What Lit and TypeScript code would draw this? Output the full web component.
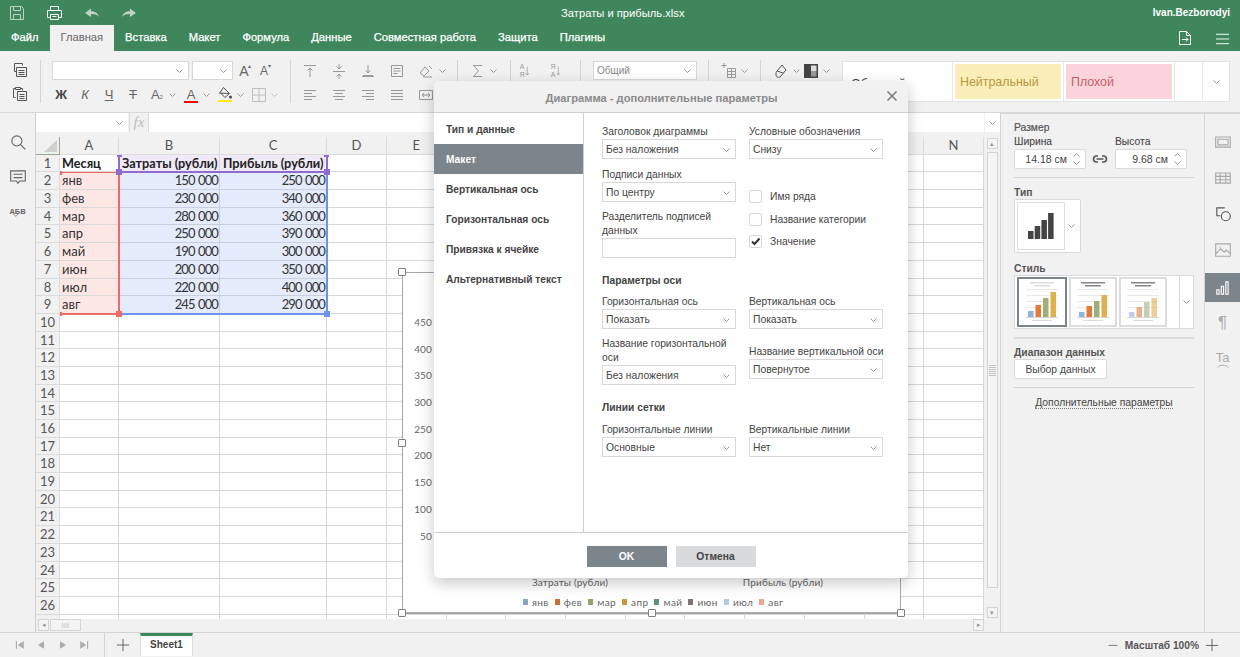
import { LitElement, css, html, svg } from "lit";
import { customElement } from "lit/decorators.js";

// small stroked icon from a single path
const ic = (d: string, size = 16, cls = "") =>
  html`<svg class="ic ${cls}" width=${size} height=${size} viewBox="0 0 16 16"><path d=${d}></path></svg>`;
// filled variant
const fi = (d: string, size = 16, cls = "") =>
  html`<svg class="fi ${cls}" width=${size} height=${size} viewBox="0 0 16 16"><path d=${d}></path></svg>`;

const chev = html`<svg class="chev" width="7" height="4" viewBox="0 0 7 4"><path d="M.5.5l3 3 3-3"></path></svg>`;

const P = {
  save: "M1.5 1.5h11l2 2v11h-13z M4.5 1.5v4h7v-4 M4.5 14.5v-5h7v5",
  print: "M4.5 5.5v-4h8v4 M4.5 12.5h-3v-7h14v7h-3 M4.5 9.5h8v5h-8z M6.5 11.5h4",
  undo: "M1 8l6-4.500v2.800c4 0 6.800 1.700 8 5.700-1.800-2.400-4.200-3-8-3V12z",
  redo: "M15 8L9 3.500v2.800c-4 0-6.800 1.700-8 5.700 1.800-2.400 4.200-3 8-3V12z",
  move: "M2.5 1.5h7l4 4v9h-11z M9.5 1.5v4h4 M5 9.5h6 M9 7.5l2 2-2 2",
  menu: "M1 3.5h14 M1 8.5h14 M1 13.5h14",
  copy: "M10.5 3.500v-2h-8v8h2 M4.5 5.5h10v9h-10z M6.5 8.5h6 M6.5 10.5h6 M6.5 12.5h6",
  paste: "M3.5 11.5h-2v-9h2 M3.5 1.5h5v2h-5z M8.5 2.5h2v2 M5.5 5.5h9v9h-9z M7.5 8.5h5 M7.5 10.5h5 M7.5 12.5h5",
  alTop: "M2 2.5h12 M8 5v9 M5.5 7.5L8 5l2.5 2.5",
  alMid: "M2 8.5h12 M8 1v5 M5.5 3.5L8 6l2.5-2.5 M8 16v-5 M5.5 13.5L8 11l2.5 2.5",
  alBot: "M8 2v8 M5.5 7.5L8 10l2.5-2.5 M2 13.5h12 M3 12.5h10",
  wrap: "M2.5 2.5h11v11h-11z M4.5 5.5h7 M4.5 8h7 M4.5 10.5h4",
  orient: "M2 10l5-6 4 4-5 5z M11 3l3 3 M5 14h9",
  left: "M2 3.5h12 M2 6.5h8 M2 9.5h12 M2 12.5h8",
  center: "M2 3.5h12 M4 6.5h8 M2 9.5h12 M4 12.5h8",
  right: "M2 3.5h12 M6 6.5h8 M2 9.5h12 M6 12.5h8",
  just: "M2 3.5h12 M2 6.5h12 M2 9.5h12 M2 12.5h12",
  merge: "M1.5 3.5h13v9h-13z M4 8h8 M6 6L4 8l2 2 M10 6l2 2-2 2",
  sigma: "M12 2.5H3.5l5 5.5-5 5.5H12",
  tblAdd: "M3 0v5 M.5 2.5h5 M6.5 5.5h8v9h-8z M6.5 8.5h8 M6.5 11.5h8 M10.5 5.5v9",
  eraser: "M9 2l4 5-6 7c-2 1-4 0-4-3 0-1 0-2 1-3z M4 8l6 2",
  borders: "M1.5 1.5h13v13h-13z M8 2v12 M2 8h12",
  search: "M7 2.5a4.500 4.500 0 1 0 0 9 4.500 4.500 0 0 0 0-9z M10.300 10.300l4.200 4.200",
  comment: "M1.5 2.5h13v9h-5l-1.500 2-1.500-2h-5z M4 5.5h8 M4 8.5h8",
  frame: "M1.5 3.5h13v9h-13z M3.5 5.5h9v5h-9z",
  table: "M1.5 3.5h13v9h-13z M1.5 6.5h13 M1.5 9.5h13 M5.5 3.5v9 M10.5 3.5v9",
  shape: "M9.5 2.5h-7v7h3 M10.5 6a4 4 0 1 0 0 8 4 4 0 0 0 0-8z",
  image: "M1.5 2.5h13v11h-13z M2 11l4-4 3 3 2-2 3 3 M5 5.5h1",
  bars: "M2.5 9.5h2v4h-2z M6.5 6.5h2v7h-2z M10.5 2.5h2v11h-2z",
  link: "M6 5H4.500a3 3 0 0 0 0 6H6 M10 5h1.500a3 3 0 0 1 0 6H10 M4.500 8h7",
  first: "M2.500 3H4v10H2.500z M13 3L5 8l8 5z",
  prev: "M12 3L4 8l8 5z",
  next: "M4 3l8 5-8 5z",
  last: "M12 3h1.500v10H12z M3 3l8 5-8 5z",
};

const rowsData = [
  ["Месяц", "Затраты (рубли)", "Прибыль (рубли)"],
  ["янв", "150 000", "250 000"],
  ["фев", "230 000", "340 000"],
  ["мар", "280 000", "360 000"],
  ["апр", "250 000", "390 000"],
  ["май", "190 000", "300 000"],
  ["июн", "200 000", "350 000"],
  ["июл", "220 000", "400 000"],
  ["авг", "245 000", "290 000"],
];
const columns = "ABCDEFGHIJKLMN".split("");
const legend = [
  ["янв", "#8aa5c4"],
  ["фев", "#c96f3e"],
  ["мар", "#93a36d"],
  ["апр", "#c49b3f"],
  ["май", "#5f9081"],
  ["июн", "#7f7373"],
  ["июл", "#b5c9e3"],
  ["авг", "#e9a58f"],
];
const nav = ["Тип и данные", "Макет", "Вертикальная ось", "Горизонтальная ось", "Привязка к ячейке", "Альтернативный текст"];
const tabs = ["Вставка", "Макет", "Формула", "Данные", "Совместная работа", "Защита", "Плагины"];

const barSet = ["#8fb3d9", "#e5793a", "#a3ad7a", "#dcb14e"];

const thumb = (heights: number[], selected = false, striped = false) => html`
  <div class="thumb ${selected ? "sel" : ""}">
    <svg width="44" height="44" viewBox="0 0 44 44">
      <rect x="10" y="2" width="24" height="1.5" fill=${selected ? "#ddd" : "#888"}></rect>
      <rect x="14" y="5" width="16" height="1.5" fill=${selected ? "#ddd" : "#888"}></rect>
      <rect x="6" y="9" width="32" height=".6" fill="#ddd"></rect>
      <rect x="6" y="15" width="32" height=".6" fill="#ddd"></rect>
      <rect x="6" y="21" width="32" height=".6" fill="#ddd"></rect>
      <rect x="6" y="27" width="32" height=".6" fill="#ddd"></rect>
      ${heights.map(
        (h, i) =>
          svg`<rect x=${8 + i * 7.5} y=${37 - h} width="5.5" height=${h} fill=${barSet[i]} opacity=${striped ? 0.6 : 1}></rect>`,
      )}
      <rect x="6" y="37" width="32" height=".6" fill="#bbb"></rect>
      <rect x="12" y="40" width="20" height="1" fill="#ddd"></rect>
    </svg>
  </div>
`;

@customElement("app-root")
export class AppRoot extends LitElement {
  field(label: string, value: string, two = false) {
    return html`
      <div class="field">
        <div class="flabel ${two ? "two" : ""}">${label}</div>
        <div class="select">${value}${chev}</div>
      </div>
    `;
  }

  renderTopbar() {
    return html`
      <div class="top">
        <div class="quick">
          <span class="q dim">${ic(P.save)}</span>
          <span class="q">${ic(P.print)}</span>
          <span class="q dim">${fi(P.undo)}</span>
          <span class="q dim">${fi(P.redo)}</span>
        </div>
        <div class="doc">Затраты и прибыль.xlsx</div>
        <div class="user">Ivan.Bezborodyi</div>
      </div>
      <div class="tabs">
        <span class="tab">Файл</span>
        <span class="tab active">Главная</span>
        ${tabs.map((t) => html`<span class="tab">${t}</span>`)}
        <span class="tabs-right">${ic(P.move)}${ic(P.menu, 15)}</span>
      </div>
    `;
  }

  renderToolbar() {
    const b = (d: string) => html`<span class="b">${ic(d)}</span>`;
    return html`
      <div class="toolbar">
        <div class="grp g1">
          <div class="r"><span class="b dark">${ic(P.copy)}</span></div>
          <div class="r"><span class="b dark">${ic(P.paste)}</span></div>
        </div>
        <div class="sep"></div>
        <div class="grp g2">
          <div class="r r1">
            <div class="input fontname">${chev}</div>
            <div class="input fontsize">${chev}</div>
            <span class="b txt lg">A<i>▴</i></span>
            <span class="b txt md">A<i>▾</i></span>
          </div>
          <div class="r r2">
            <span class="b txt dk"><b>Ж</b></span>
            <span class="b txt"><em>К</em></span>
            <span class="b txt"><u>Ч</u></span>
            <span class="b txt"><s>Т</s></span>
            <span class="b txt">A<small>₂</small></span><span class="c">${chev}</span>
            <span class="b txt fcolor">A</span><span class="c">${chev}</span>
            <span class="b fill">
              <svg width="16" height="17" viewBox="0 0 16 17">
                <path class="strk" d="M6.5 1.5l6 6-4.500 4-5-5z M2 7l10 .5"></path>
                <circle cx="13.5" cy="11" r="1.5" fill="#444"></circle>
                <rect x="1" y="14" width="14" height="2" fill="#fdf000"></rect>
              </svg>
            </span><span class="c">${chev}</span>
            <span class="b light">${ic(P.borders)}</span><span class="c light">${chev}</span>
          </div>
        </div>
        <div class="sep"></div>
        <div class="grp g3">
          <div class="r">
            ${b(P.alTop)}${b(P.alMid)}${b(P.alBot)}${b(P.wrap)}${b(P.orient)}<span class="c tight">${chev}</span>
          </div>
          <div class="r">${b(P.left)}${b(P.center)}${b(P.right)}${b(P.just)}${b(P.merge)}</div>
        </div>
        <div class="sep"></div>
        <div class="grp g4"><div class="r">${b(P.sigma)}<span class="c">${chev}</span></div></div>
        <div class="sep"></div>
        <div class="grp g5">
          <div class="r">
            <span class="b sort"><span>А<br />Я</span>${ic("M3 2v11 M1 11l2 2.5L5 11", 12)}</span>
            <span class="b sort"><span>Я<br />А</span>${ic("M3 2v11 M1 11l2 2.5L5 11", 12)}</span>
          </div>
        </div>
        <div class="sep"></div>
        <div class="grp g6"><div class="r"><div class="input fmt">Общий${chev}</div></div></div>
        <div class="sep"></div>
        <div class="grp g7"><div class="r">${b(P.tblAdd)}<span class="c">${chev}</span></div></div>
        <div class="sep"></div>
        <div class="grp g8">
          <div class="r">
            <span class="b dark">${ic(P.eraser)}</span><span class="c">${chev}</span>
            <span class="b">
              <svg width="14" height="14" viewBox="0 0 14 14">
                <rect width="14" height="14" fill="#444"></rect>
                <rect x="7" y="1.5" width="5.5" height="5.5" fill="#ddd"></rect>
                <rect x="7" y="7" width="5.5" height="5.5" fill="#999"></rect>
              </svg>
            </span><span class="c">${chev}</span>
          </div>
        </div>
        <div class="styles">
          <div class="st normal"><span>Обычный</span></div>
          <div class="st"><span class="neutral">Нейтральный</span></div>
          <div class="st"><span class="bad">Плохой</span></div>
          <div class="st blank"></div>
          <div class="st more">${chev}</div>
        </div>
      </div>
    `;
  }

  renderCell(r: number, c: number) {
    const text = rowsData[r - 1]?.[c] ?? "";
    const cls = [
      "cell",
      r === 1 && c < 3 ? "bold" : "",
      r === 1 && (c === 1 || c === 2) ? "hl-purple" : "",
      r > 1 && c > 0 && c < 3 ? "num" : "",
      r > 1 && r < 10 && c === 0 ? "hl-red" : "",
      r > 1 && r < 10 && (c === 1 || c === 2) ? "hl-blue" : "",
    ].join(" ");
    return html`<div class=${cls}>${text}</div>`;
  }

  renderGrid() {
    const rows = Array.from({ length: 27 }, (_, i) => i + 1);
    return html`
      <div class="sheet">
        <div class="grid">
          <div class="corner"></div>
          ${columns.map((c) => html`<div class="head">${c}</div>`)}
          ${rows.map(
            (r) => html`
              <div class="rowh">${r < 27 ? r : ""}</div>
              ${columns.map((_, c) => this.renderCell(r, c))}
            `,
          )}
        </div>
        <div class="grid ranges">
          <div class="range blue"><i class="hd br"></i></div>
          <div class="range red"><i class="hd tick tl"></i><i class="hd tick bl"></i><i class="hd br"></i></div>
          <div class="range purple">
            <i class="hd tick tl0"></i><i class="hd tick tr0"></i><i class="hd bl0"></i><i class="hd br"></i>
          </div>
        </div>
        <div class="chart">
          <div class="axis">
            ${[450, 400, 350, 300, 250, 200, 150, 100, 50].map((v) => html`<span>${v}</span>`)}
          </div>
          <div class="cats"><span>Затраты (рубли)</span><span>Прибыль (рубли)</span></div>
          <div class="legend">
            ${legend.map(([t, col]) => html`<span><i style="background:${col}"></i>${t}</span>`)}
          </div>
          ${["h1", "h2", "h3", "h4", "h5", "h6", "h7", "h8"].map((h) => html`<b class="handle ${h}"></b>`)}
        </div>
      </div>
    `;
  }

  renderCenter() {
    return html`
      <div class="center">
        <div class="formula">
          <div class="namebox">${chev}</div>
          <div class="fx">fx</div>
          <div class="finput"></div>
          <div class="fexp">${chev}</div>
        </div>
        <div class="body">
          <div class="sheetcol">
            ${this.renderGrid()}
            <div class="hscroll">
              <span class="sb">◂</span>
              <span class="sb hthumb">|||||</span>
              <span class="grow"></span>
              <span class="sb">▸</span>
            </div>
          </div>
          <div class="vscroll">
            <span class="sb">▴</span>
            <span class="vthumb"><em></em></span>
            <span class="sb">▾</span>
          </div>
        </div>
      </div>
    `;
  }

  renderPanel() {
    return html`
      <div class="panel">
        <div class="ptitle thin">Размер</div>
        <div class="sizes">
          <div>
            <div class="plabel">Ширина</div>
            <div class="spin">14.18 см<span class="arrows">${chev}${chev}</span></div>
          </div>
          <span class="lnk">${ic(P.link, 16, "thick")}</span>
          <div>
            <div class="plabel">Высота</div>
            <div class="spin">9.68 см<span class="arrows">${chev}${chev}</span></div>
          </div>
        </div>
        <div class="pline"></div>
        <div class="ptitle">Тип</div>
        <div class="typebox">
          <div class="typeinner">
            <svg width="26" height="26" viewBox="0 0 26 26">
              <path fill="#444" d="M0 18h5.500v8H0zM6.700 13h5.500v13H6.700zM13.400 7h5.500v19h-5.500zM20.100 0h5.500v26h-5.500z"></path>
            </svg>
          </div>
          <span class="typechev">${chev}</span>
        </div>
        <div class="ptitle t2">Стиль</div>
        <div class="stylebox">
          ${thumb([6, 12, 19, 25], true)}${thumb([5, 11, 16, 22])}${thumb([5, 10, 15, 19], false, true)}
          <span class="stylechev">${chev}</span>
        </div>
        <div class="pline l2"></div>
        <div class="ptitle t3">Диапазон данных</div>
        <div class="pbtn">Выбор данных</div>
        <div class="pline"></div>
        <div class="adv"><span>Дополнительные параметры</span></div>
      </div>
    `;
  }

  renderDialog() {
    return html`
      <div class="dialog">
        <div class="dhead">
          <span>Диаграмма - дополнительные параметры</span>
          <svg class="close" width="10" height="10" viewBox="0 0 10 10"><path d="M.5.5l9 9M9.500.5l-9 9"></path></svg>
        </div>
        <div class="dbody">
          <div class="dnav">
            ${nav.map((n, i) => html`<div class="navitem ${i === 1 ? "on" : ""}">${n}</div>`)}
          </div>
          <div class="dform">
            <div class="cols">
              <div class="fcol">
                ${this.field("Заголовок диаграммы", "Без наложения")}
                ${this.field("Подписи данных", "По центру")}
                <div class="field">
                  <div class="flabel two">Разделитель подписей данных</div>
                  <div class="select"></div>
                </div>
              </div>
              <div class="fcol">
                ${this.field("Условные обозначения", "Снизу")}
                <div class="checks">
                  <label class="chk"><i></i>Имя ряда</label>
                  <label class="chk"><i></i>Название категории</label>
                  <label class="chk">
                    <i>
                      <svg width="11" height="11" viewBox="0 0 11 11">
                        <path d="M2 5.500l2.500 2.500L9.500 2.500" fill="none" stroke="#333" stroke-width="2"></path>
                      </svg>
                    </i>
                    Значение
                  </label>
                </div>
              </div>
            </div>
            <div class="sect">Параметры оси</div>
            <div class="cols">
              <div class="fcol">
                ${this.field("Горизонтальная ось", "Показать")}
                ${this.field("Название горизонтальной оси", "Без наложения", true)}
              </div>
              <div class="fcol">
                ${this.field("Вертикальная ось", "Показать")}
                <div class="push">${this.field("Название вертикальной оси", "Повернутое")}</div>
              </div>
            </div>
            <div class="sect s2">Линии сетки</div>
            <div class="cols">
              <div class="fcol">${this.field("Горизонтальные линии", "Основные")}</div>
              <div class="fcol">${this.field("Вертикальные линии", "Нет")}</div>
            </div>
          </div>
        </div>
        <div class="dfoot">
          <span class="btn ok">OK</span>
          <span class="btn cancel">Отмена</span>
        </div>
      </div>
    `;
  }

  render() {
    return html`
      ${this.renderTopbar()} ${this.renderToolbar()}
      <div class="main">
        <div class="lside">
          ${ic(P.search, 18)} ${ic(P.comment, 18)}
          <span class="spell">АБВ${ic("M2 1l3.500 4L9 1", 11)}</span>
        </div>
        ${this.renderCenter()} ${this.renderPanel()}
        <div class="rside">
          <span class="ri">${ic(P.frame, 18)}</span>
          <span class="ri">${ic(P.table, 18)}</span>
          <span class="ri dark">${ic(P.shape, 18)}</span>
          <span class="ri">${ic(P.image, 18)}</span>
          <span class="ri on">${ic(P.bars, 18)}</span>
          <span class="ri glyph">¶</span>
          <span class="ri glyph ta">
            Ta
            <svg width="12" height="4" viewBox="0 0 12 4"><path d="M.5 3.500C3 .5 9 .5 11.500 3.500" fill="none" stroke="#aaa"></path></svg>
          </span>
        </div>
      </div>
      <div class="status">
        <div class="snav">${fi(P.first, 12)}${fi(P.prev, 12)}${fi(P.next, 12)}${fi(P.last, 12)}</div>
        <span class="plus">${ic("M8 1v14 M1 8h14", 14)}</span>
        <div class="stab">Sheet1</div>
        <div class="zoom">
          ${ic("M2 8.5h12", 12)}<span>Масштаб 100%</span>${ic("M8 1v14 M1 8.5h14", 14)}
        </div>
      </div>
      ${this.renderDialog()}
    `;
  }

  static styles = css`
    :host {
      display: block;
      position: relative;
      width: 1240px;
      height: 657px;
      overflow: hidden;
      background: #f1f1f1;
      font-family: "Liberation Sans", Arial, sans-serif;
      font-size: 10.3px;
      color: #444;
    }
    .ic {
      fill: none;
      stroke: currentColor;
      stroke-width: 1;
      display: block;
    }
    .ic.thick {
      stroke-width: 1.6;
    }
    .fi {
      fill: currentColor;
      display: block;
    }
    .chev {
      fill: none;
      stroke: #999;
      stroke-width: 1;
      display: block;
      flex: none;
    }

    /* header */
    .top {
      height: 25px;
      background: #40865c;
      color: #fff;
      display: flex;
      align-items: center;
      position: relative;
    }
    .quick {
      display: flex;
      padding-left: 9px;
      gap: 21.3px;
    }
    .q {
      width: 16px;
      display: block;
    }
    .q.dim {
      opacity: 0.65;
    }
    .doc {
      flex: 1;
      text-align: center;
      padding-right: 44px;
      font-size: 11.2px;
    }
    .user {
      padding-right: 10px;
      font-weight: bold;
      font-size: 10px;
    }
    .tabs {
      height: 26px;
      background: #40865c;
      color: #fff;
      display: flex;
      font-size: 11.2px;
      -webkit-text-stroke: 0.25px #fff;
    }
    .tab {
      padding: 0 11px;
      line-height: 24px;
      height: 26px;
      box-sizing: border-box;
    }
    .tab.active {
      background: #f1f1f1;
      color: #666;
      -webkit-text-stroke: 0;
    }
    .tabs-right {
      margin-left: auto;
      display: flex;
      align-items: center;
      gap: 22px;
      padding: 0 10px 0 0;
      height: 26px;
    }

    /* toolbar */
    .toolbar {
      height: 62px;
      box-sizing: border-box;
      border-bottom: 1px solid #d8d8d8;
      display: flex;
      padding-top: 10px;
      align-items: flex-start;
      color: #999;
    }
    .sep {
      width: 1px;
      height: 43px;
      background: #d4d4d4;
      margin-top: -1px;
      flex: none;
    }
    .grp {
      flex: none;
      display: flex;
      flex-direction: column;
      gap: 5px;
    }
    .r {
      display: flex;
      align-items: center;
      height: 19px;
    }
    .b {
      width: 20px;
      height: 19px;
      flex: none;
      display: flex;
      align-items: center;
      justify-content: center;
      position: relative;
    }
    .b.dark {
      color: #555;
    }
    .c {
      width: 10px;
      flex: none;
      display: flex;
      justify-content: center;
    }
    .light {
      opacity: 0.55;
    }
    .g1 {
      width: 40px;
      align-items: center;
      margin-top: -1px;
    }
    .g2 {
      width: 249px;
      padding-left: 11px;
      box-sizing: border-box;
    }
    .r2 {
      margin-left: -1px;
    }
    .r2 > .b {
      margin-left: 4px;
    }
    .r2 > .b:first-child {
      margin-left: 0;
    }
    .input {
      height: 19px;
      box-sizing: border-box;
      background: #fff;
      border: 1px solid #d8d8d8;
      display: flex;
      align-items: center;
      justify-content: flex-end;
      padding-right: 5px;
      flex: none;
    }
    .fontname {
      width: 137px;
    }
    .fontsize {
      width: 41px;
      margin: 0 1px 0 3px;
    }
    .txt {
      font-size: 13px;
      color: #666;
    }
    .txt.lg {
      font-size: 14px;
    }
    .txt.md {
      font-size: 12px;
    }
    .txt i {
      font-style: normal;
      font-size: 6px;
      position: absolute;
      left: 14px;
      top: 1px;
    }
    .txt small {
      font-size: 9px;
    }
    .txt b {
      color: #444;
    }
    .fcolor::after {
      content: "";
      position: absolute;
      left: 3px;
      right: 3px;
      bottom: 1px;
      height: 2px;
      background: #f00;
    }
    .strk {
      fill: none;
      stroke: #555;
    }
    .g3 {
      width: 166px;
      padding-left: 9px;
      box-sizing: border-box;
    }
    .g3 .r {
      gap: 9px;
    }
    .g3 .c.tight {
      margin-left: -8px;
    }
    .g4 {
      width: 52px;
      padding-left: 10px;
      box-sizing: border-box;
    }
    .g5 {
      width: 69px;
      padding-left: 7px;
      box-sizing: border-box;
    }
    .g5 .r {
      gap: 11px;
    }
    .sort {
      font-size: 7px;
      line-height: 8px;
      text-align: center;
    }
    .g6 {
      width: 127px;
      padding-left: 12px;
      box-sizing: border-box;
    }
    .fmt {
      width: 104px;
      justify-content: space-between;
      padding-left: 3px;
      font-size: 10px;
      color: #888;
    }
    .g7 {
      width: 51px;
      padding-left: 10px;
      box-sizing: border-box;
    }
    .g8 {
      width: 81px;
      padding-left: 10px;
      box-sizing: border-box;
    }
    .styles {
      width: 388px;
      height: 41px;
      flex: none;
      background: #fff;
      border: 1px solid #e2e2e2;
      box-sizing: border-box;
      display: grid;
      grid-template-columns: 110px 111px 111px 28px 1fr;
    }
    .st {
      border-right: 1px solid #e8e8e8;
      display: flex;
      align-items: stretch;
      padding: 2px 2px;
      font-size: 12.4px;
    }
    .st span {
      flex: 1;
      display: flex;
      align-items: center;
      padding-left: 5px;
    }
    .normal span {
      padding: 4px 0 0 6px;
      color: #444;
    }
    .neutral {
      background: #fbeeb8;
      color: #b5983f;
    }
    .bad {
      background: #fbd3da;
      color: #c2606c;
    }
    .more {
      border: none;
      align-items: center;
      justify-content: center;
    }

    /* main */
    .main {
      height: 519px;
      display: flex;
    }
    .lside {
      width: 36px;
      flex: none;
      box-sizing: border-box;
      border-right: 1px solid #cfcfcf;
      display: flex;
      flex-direction: column;
      align-items: center;
      padding-top: 20px;
      gap: 17px;
      color: #666;
    }
    .spell {
      font-size: 7.5px;
      font-weight: bold;
      line-height: 7px;
      display: flex;
      flex-direction: column;
      align-items: center;
      margin-top: 5px;
    }
    .spell svg {
      margin-top: -2px;
    }
    .center {
      flex: 1;
      min-width: 0;
      display: flex;
      flex-direction: column;
    }
    .formula {
      height: 19px;
      display: flex;
      flex: none;
    }
    .namebox {
      width: 92px;
      flex: none;
      background: #fff;
      display: flex;
      align-items: center;
      justify-content: flex-end;
      padding-right: 5px;
      box-sizing: border-box;
    }
    .fx {
      width: 20px;
      flex: none;
      margin-left: 1px;
      background: #f1f1f1;
      border: 1px solid #dcdcdc;
      border-width: 0 1px;
      box-sizing: border-box;
      text-align: center;
      font: italic 15px/19px "Liberation Serif", serif;
      color: #bbb;
    }
    .finput {
      width: 835px;
      flex: none;
      background: #fff;
    }
    .fexp {
      flex: 1;
      margin-left: 1px;
      background: #fff;
      display: flex;
      align-items: center;
      justify-content: center;
    }
    .body {
      flex: 1;
      display: flex;
      padding-top: 5px;
      min-height: 0;
    }
    .sheetcol {
      width: 948px;
      flex: none;
      display: flex;
      flex-direction: column;
    }
    .sheet {
      height: 482px;
      position: relative;
      overflow: hidden;
      background: #fff;
    }
    .grid {
      display: grid;
      grid-template-columns: 24px 59px 101px 107px 60px repeat(10, 59.7px);
      grid-auto-rows: 17.7px;
      font-family: Lato, "Open Sans", sans-serif;
      font-size: 13px;
    }
    .corner,
    .head,
    .rowh {
      background: #f1f1f1;
      border-right: 1px solid #dcdcdc;
      border-bottom: 1px solid #dcdcdc;
      box-sizing: border-box;
      color: #555;
      text-align: center;
      line-height: 17px;
      font-size: 13px;
    }
    .corner {
      border-right: 1px solid #9aa78f;
      border-bottom: 1px solid #9aa78f;
      position: relative;
    }
    .corner::after {
      content: "";
      position: absolute;
      right: 2px;
      bottom: 2px;
      border-style: solid;
      border-width: 0 0 12px 13px;
      border-color: transparent transparent #cfcfcf transparent;
    }
    .cell {
      border-right: 1px solid #d8d8d8;
      border-bottom: 1px solid #d8d8d8;
      box-sizing: border-box;
      padding: 0 2px;
      line-height: 17px;
      color: #333;
      white-space: nowrap;
      overflow: hidden;
    }
    .bold {
      font-weight: bold;
      font-size: 12.7px;
      color: #222;
    }
    .hl-purple {
      background: #efe9f8;
      padding-left: 3px;
    }
    .num {
      text-align: right;
      letter-spacing: -0.9px;
      word-spacing: 1px;
      padding-right: 1px;
    }
    .hl-red {
      background: #fde7e5;
    }
    .hl-blue {
      background: #e4ebfb;
      border-color: #c9cfdc;
    }
    .ranges {
      position: absolute;
      inset: 0;
    }
    .range {
      position: relative;
      box-sizing: border-box;
    }
    .red {
      grid-column: 2;
      grid-row: 3 / 11;
      border: solid #ee6a6a;
      border-width: 1px 2px 2px 0;
      margin-right: -1px;
      margin-bottom: -1px;
    }
    .blue {
      grid-column: 3 / 5;
      grid-row: 3 / 11;
      border: solid #6c92ec;
      border-width: 0 2px 2px 0;
      margin-right: -1px;
      margin-bottom: -1px;
    }
    .purple {
      grid-column: 3 / 5;
      grid-row: 2;
      border: solid #8f6bd0;
      border-width: 0 2px 2px 2px;
      margin: 0 -1px -1px -1px;
    }
    .hd {
      position: absolute;
      width: 6px;
      height: 6px;
      background: currentColor;
    }
    .red .hd {
      color: #ee6a6a;
    }
    .blue .hd {
      color: #6c92ec;
    }
    .purple .hd {
      color: #8f6bd0;
    }
    .br {
      right: -4px;
      bottom: -4px;
    }
    .bl0 {
      left: -4px;
      bottom: -4px;
    }
    .tick {
      width: 2px;
      height: 4px;
    }
    .tl {
      left: 0;
      top: -2px;
    }
    .bl {
      left: 0;
      bottom: -3px;
    }
    .tick.tl0,
    .tick.tr0 {
      width: 5px;
      height: 2px;
      top: 0;
    }
    .tl0 {
      left: -3px;
    }
    .tr0 {
      right: -3px;
    }

    /* chart sits on the sheet */
    .chart {
      position: absolute;
      left: 366px;
      top: 135px;
      width: 499px;
      height: 342px;
      box-sizing: border-box;
      background: #fff;
      border: 1px solid #a8a8a8;
      border-bottom-width: 2px;
      font-family: Lato, "Open Sans", sans-serif;
      color: #666;
      font-size: 10px;
      letter-spacing: 0.15px;
    }
    .axis {
      position: absolute;
      left: 0;
      top: 36px;
      width: 29px;
      display: flex;
      flex-direction: column;
      align-items: flex-end;
    }
    .axis span {
      height: 26.7px;
      line-height: 26.7px;
    }
    .cats {
      position: absolute;
      top: 303px;
      left: 0;
      display: grid;
      grid-template-columns: 334px 92px;
      justify-items: center;
    }
    .cats span {
      white-space: nowrap;
    }
    .legend {
      position: absolute;
      top: 323px;
      left: 120px;
      display: flex;
      gap: 6px;
    }
    .legend span {
      display: flex;
      align-items: center;
      gap: 4px;
      line-height: 12px;
      letter-spacing: 0.4px;
    }
    .legend i {
      width: 5px;
      height: 6px;
    }
    .handle {
      position: absolute;
      width: 8px;
      height: 8px;
      box-sizing: border-box;
      background: #fff;
      border: 1px solid #808080;
      border-radius: 1px;
    }
    .h1,
    .h4,
    .h6 {
      left: -5px;
    }
    .h2,
    .h7 {
      left: 245px;
    }
    .h3,
    .h5,
    .h8 {
      right: -5px;
    }
    .h1,
    .h2,
    .h3 {
      top: -5px;
    }
    .h4,
    .h5 {
      top: 166px;
    }
    .h6,
    .h7,
    .h8 {
      bottom: -5px;
    }
    .hscroll {
      height: 12px;
      flex: none;
      display: flex;
      align-items: stretch;
      padding: 0 0 0 2px;
      gap: 1px;
    }
    .grow {
      flex: 1;
    }
    .sb {
      width: 11px;
      background: #f4f4f4;
      border: 1px solid #d4d4d4;
      box-sizing: border-box;
      font-size: 7px;
      line-height: 10px;
      text-align: center;
      color: #999;
      flex: none;
      overflow: hidden;
    }
    .hthumb {
      width: 31px;
      font-size: 6px;
      letter-spacing: 0;
      color: #bbb;
    }
    .vscroll {
      flex: 1;
      height: 482px;
      display: flex;
      flex-direction: column;
      align-items: center;
      padding-top: 1px;
      box-sizing: border-box;
    }
    .vscroll .sb {
      width: 11px;
      height: 11px;
    }
    .vthumb {
      width: 11px;
      height: 436px;
      margin-top: 3px;
      box-sizing: border-box;
      border: 1px solid #d4d4d4;
      background: #f4f4f4;
      display: flex;
      align-items: center;
      justify-content: center;
      margin-bottom: 19px;
    }
    .vthumb em {
      display: block;
      width: 7px;
      height: 11px;
      background: repeating-linear-gradient(#c4c4c4 0 1px, transparent 1px 2px);
    }

    /* right panel */
    .panel {
      width: 204px;
      flex: none;
      box-sizing: border-box;
      border-left: 1px solid #d4d4d4;
      border-top: 1px solid #d8d8d8;
      padding: 7px 9px 0 13px;
    }
    .ptitle {
      font-weight: bold;
      line-height: 14px;
      padding-top: 1px;
      margin-bottom: -1px;
      color: #555;
    }
    .ptitle.thin {
      font-weight: normal;
      padding-top: 0;
      margin-bottom: 0;
      -webkit-text-stroke: 0.2px #555;
    }
    .plabel {
      line-height: 14px;
      -webkit-text-stroke: 0.1px #555;
    }
    .sizes {
      display: flex;
      align-items: flex-end;
      gap: 6px;
    }
    .spin {
      width: 72px;
      height: 20px;
      box-sizing: border-box;
      border: 1px solid #dadada;
      background: #fff;
      border-radius: 2px;
      display: flex;
      align-items: center;
      justify-content: flex-end;
      padding-right: 18px;
      position: relative;
      font-size: 10.5px;
    }
    .arrows {
      position: absolute;
      right: 5px;
      top: 3px;
      display: flex;
      flex-direction: column;
      gap: 4px;
    }
    .arrows svg:first-child {
      transform: rotate(180deg);
    }
    .lnk {
      width: 16px;
      height: 20px;
      color: #555;
      display: flex;
      align-items: center;
      margin-right: 1px;
    }
    .pline {
      height: 1px;
      background: #d4d4d4;
      width: 180px;
      margin: 8px 0 7px;
    }
    .pline.l2 {
      height: 2px;
      margin-bottom: 6px;
      background: #ddd;
    }
    .typebox {
      width: 67px;
      height: 54px;
      box-sizing: border-box;
      background: #fff;
      border: 1px solid #dadada;
      border-radius: 2px;
      padding: 2px;
      display: flex;
      align-items: center;
    }
    .typeinner {
      width: 48px;
      height: 48px;
      box-sizing: border-box;
      border: 1px solid #dedede;
      display: flex;
      align-items: center;
      justify-content: center;
    }
    .typechev {
      flex: 1;
      display: flex;
      justify-content: center;
    }
    .t2 {
      margin-top: 8px;
    }
    .stylebox {
      width: 180px;
      height: 54px;
      box-sizing: border-box;
      background: #fff;
      border: 1px solid #dadada;
      padding: 1px 0 0 2px;
      display: flex;
      gap: 2px;
      position: relative;
    }
    .thumb {
      width: 48px;
      height: 50px;
      box-sizing: border-box;
      border: 2px solid #ddd;
      display: flex;
      align-items: center;
      justify-content: center;
    }
    .thumb svg {
      flex: none;
    }
    .thumb.sel {
      width: 50px;
      border-color: #7d858c;
    }
    .stylechev {
      position: absolute;
      right: 0;
      top: 0;
      bottom: 0;
      width: 13px;
      border-left: 1px solid #dadada;
      display: flex;
      align-items: center;
      justify-content: center;
    }
    .pbtn {
      width: 93px;
      height: 20px;
      box-sizing: border-box;
      background: #fff;
      border: 1px solid #dadada;
      border-radius: 2px;
      text-align: center;
      line-height: 20px;
    }
    .adv {
      width: 180px;
      text-align: center;
      line-height: 15px;
    }
    .adv span {
      border-bottom: 1px dotted #777;
    }
    .rside {
      width: 36px;
      flex: none;
      box-sizing: border-box;
      border-left: 1px solid #d4d4d4;
      border-top: 1px solid #d8d8d8;
      display: flex;
      flex-direction: column;
      padding-top: 10px;
      align-items: stretch;
      color: #a8a8a8;
    }
    .ri {
      height: 36px;
      flex: none;
      display: flex;
      align-items: center;
      justify-content: center;
    }
    .ri.dark {
      color: #555;
    }
    .ri.on {
      height: 29px;
      margin: 5px 0 3px;
      background: #7d858c;
      color: #fff;
    }
    .ri.glyph {
      font: 17px "Liberation Sans", sans-serif;
      color: #aaa;
    }
    .ri.ta {
      font-size: 13px;
      line-height: 13px;
      flex-direction: column;
    }

    /* status bar */
    .status {
      height: 25px;
      box-sizing: border-box;
      border-top: 1px solid #d4d4d4;
      display: flex;
      color: #aaa;
    }
    .snav {
      width: 105px;
      box-sizing: border-box;
      border-right: 1px solid #d4d4d4;
      padding: 6px 0 0 14px;
      display: flex;
      gap: 9.3px;
      height: 24px;
    }
    .plus {
      width: 35px;
      display: flex;
      align-items: center;
      justify-content: center;
      color: #555;
      height: 24px;
    }
    .stab {
      width: 53px;
      height: 23px;
      box-sizing: border-box;
      background: #fff;
      border-top: 3px solid #40865c;
      border-right: 1px solid #ddd;
      border-left: 1px solid #ddd;
      color: #444;
      font-weight: bold;
      text-align: center;
      line-height: 18px;
      font-size: 10px;
    }
    .zoom {
      margin-left: auto;
      display: flex;
      align-items: center;
      padding-right: 21px;
      gap: 6px;
      color: #555;
      font-weight: bold;
      height: 24px;
      font-size: 10.2px;
    }

    /* dialog */
    .dialog {
      position: absolute;
      left: 434px;
      top: 81px;
      width: 474px;
      height: 497px;
      background: #fff;
      border-radius: 5px;
      box-shadow: 0 5px 15px rgba(0, 0, 0, 0.22);
      display: flex;
      flex-direction: column;
      overflow: hidden;
    }
    .dhead {
      height: 32px;
      flex: none;
      box-sizing: border-box;
      background: #f1f1f1;
      border-bottom: 1px solid #cfcfcf;
      color: #8a8a8a;
      font-weight: bold;
      font-size: 11.15px;
      text-align: center;
      line-height: 34px;
      position: relative;
      padding-right: 19px;
    }
    .close {
      position: absolute;
      right: 11px;
      top: 10px;
      stroke: #777;
      stroke-width: 1.5;
      fill: none;
    }
    .dbody {
      flex: 1;
      display: flex;
      min-height: 0;
    }
    .dnav {
      width: 150px;
      flex: none;
      box-sizing: border-box;
      border-right: 1px solid #cfcfcf;
      padding-top: 1px;
    }
    .navitem {
      height: 30px;
      line-height: 32px;
      padding-left: 12px;
      font-weight: bold;
      font-size: 10.2px;
      color: #444;
    }
    .navitem.on {
      background: #7d858c;
      color: #fff;
    }
    .dform {
      padding: 11px 0 0 18px;
    }
    .cols {
      display: grid;
      grid-template-columns: 134px 134px;
      gap: 13px;
    }
    .field + .field {
      margin-top: 8px;
    }
    .flabel {
      line-height: 14px;
      padding-top: 1px;
      white-space: nowrap;
    }
    .flabel.two {
      padding-top: 0;
      white-space: normal;
    }
    .select {
      height: 20px;
      box-sizing: border-box;
      border: 1px solid #d8d8d8;
      padding: 1px 5px 0 3px;
      display: flex;
      justify-content: space-between;
      align-items: center;
    }
    .checks {
      margin-top: 31px;
      display: flex;
      flex-direction: column;
      gap: 9px;
    }
    .chk {
      display: flex;
      align-items: center;
      gap: 8px;
      height: 13.5px;
    }
    .chk i {
      width: 13px;
      height: 13px;
      box-sizing: border-box;
      border: 1px solid #d8d8d8;
      border-radius: 2px;
      display: flex;
      align-items: center;
      justify-content: center;
    }
    .sect {
      font-weight: bold;
      line-height: 16px;
      margin: 15px 0 5px;
    }
    .sect.s2 {
      margin-bottom: 6px;
    }
    .push {
      margin-top: 15px;
    }
    .dfoot {
      height: 46px;
      flex: none;
      box-sizing: border-box;
      border-top: 1px solid #cfcfcf;
      display: flex;
      justify-content: center;
      gap: 9px;
      padding: 13px 0 0 0;
    }
    .btn {
      width: 80px;
      height: 21px;
      line-height: 21px;
      text-align: center;
      font-weight: bold;
    }
    .ok {
      background: #7d858c;
      color: #fff;
    }
    .cancel {
      background: #d8dadc;
      color: #444;
    }
  `;
}
